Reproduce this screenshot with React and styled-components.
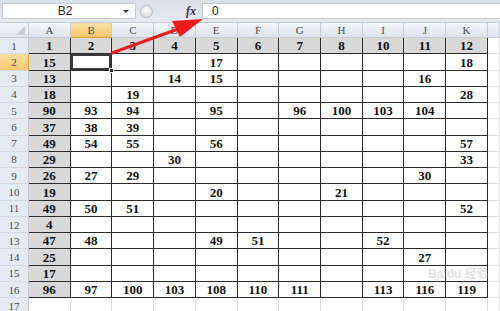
import React from "react";
import styled, { createGlobalStyle, css } from "styled-components";

const GlobalStyle = createGlobalStyle`
  html, body { margin: 0; padding: 0; background: #ffffff; overflow: hidden; }
  #root { width: 500px; height: 311px; }
`;

const Frame = styled.div`
  position: relative;
  width: 500px;
  height: 311px;
  overflow: hidden;
  background: #ffffff;
  display: flex;
  flex-direction: column;
`;

const FormulaBar = styled.div`
  height: 23px;
  flex: none;
  box-sizing: border-box;
  display: flex;
  align-items: stretch;
  padding: 3px 0 3px 2px;
  background: linear-gradient(#d9e0ea, #e4e9f0);
  border-bottom: 1px solid #c5cdd8;
`;

const NameBox = styled.div`
  width: 134px;
  box-sizing: border-box;
  background: #fff;
  border: 1px solid #c3cad4;
  display: flex;
  align-items: center;
  font-family: "Liberation Sans", Arial, sans-serif;
  font-size: 12px;
  color: #222;
`;

const NameText = styled.span`
  flex: 1;
  text-align: center;
  padding-left: 4px;
`;

const DropArrow = styled.span`
  width: 0;
  height: 0;
  margin-right: 6px;
  border-left: 3px solid transparent;
  border-right: 3px solid transparent;
  border-top: 3px solid #333;
`;

const Splitter = styled.div`
  width: 66px;
  display: flex;
  align-items: center;
  justify-content: space-between;
  padding: 0 6px 0 4px;
  box-sizing: border-box;
`;

const Knob = styled.span`
  width: 13px;
  height: 13px;
  border-radius: 50%;
  background: radial-gradient(circle at 50% 40%, #fdfdfd, #cfd5dd);
  border: 1px solid #b7bec8;
  box-sizing: border-box;
`;

const Fx = styled.span`
  font-family: "Liberation Serif", "Times New Roman", serif;
  font-style: italic;
  font-weight: bold;
  font-size: 12px;
  color: #333;
`;

const FormulaInput = styled.div`
  flex: 1;
  background: #fff;
  border: 1px solid #c3cad4;
  border-right: none;
  display: flex;
  align-items: center;
  padding-left: 9px;
  font-family: "Liberation Sans", Arial, sans-serif;
  font-size: 12px;
  color: #222;
`;

const Sheet = styled.div`
  display: grid;
  grid-template-columns: 29px repeat(11, 41.73px) 1fr;
  grid-template-rows: 15px repeat(17, 16.27px);
`;

const headerBase = css`
  box-sizing: border-box;
  display: flex;
  align-items: center;
  justify-content: center;
  font-family: "Liberation Serif", "Times New Roman", serif;
  font-size: 11px;
  color: #4a4a4a;
  border-right: 1px solid #c5cbd4;
  border-bottom: 1px solid #c5cbd4;
`;

const Corner = styled.div`
  ${headerBase};
  position: relative;
  background: linear-gradient(#f1f4f8, #dfe5ec);
  &::after {
    content: "";
    position: absolute;
    right: 3px;
    bottom: 2px;
    width: 0;
    height: 0;
    border-left: 9px solid transparent;
    border-bottom: 9px solid #c9ced6;
  }
`;

const ColHeader = styled.div`
  ${headerBase};
  background: ${(p) =>
    p.$active
      ? "linear-gradient(#fbe3a6, #f3c767)"
      : "linear-gradient(#f3f6fa, #dde3eb)"};
  border-bottom-color: ${(p) => (p.$active ? "#e5a53b" : "#c5cbd4")};
`;

const RowHeader = styled.div`
  ${headerBase};
  background: ${(p) =>
    p.$active ? "linear-gradient(#fbe1a0, #f3c86b)" : "#e4eaf2"};
  border-right-color: ${(p) => (p.$active ? "#e5a53b" : "#c5cbd4")};
  border-bottom-color: #d2d8e0;
`;

const Cell = styled.div`
  position: relative;
  box-sizing: border-box;
  display: flex;
  align-items: flex-end;
  justify-content: center;
  font-family: "Liberation Serif", "Times New Roman", serif;
  font-weight: bold;
  font-size: 13px;
  line-height: 15px;
  color: #111;
  background: ${(p) => (p.$shaded ? "#d8d8d8" : "#ffffff")};
  border-right: 1px solid ${(p) => (p.$outside ? "#dadcde" : "#2a2a2a")};
  border-bottom: 1px solid ${(p) => (p.$outside ? "#dadcde" : "#2a2a2a")};
  ${(p) =>
    p.$selected &&
    css`
      box-shadow: inset 0 0 0 2px #3a3a3a;
    `}
`;

const FillHandle = styled.span`
  position: absolute;
  right: -3px;
  bottom: -3px;
  width: 5px;
  height: 5px;
  background: #2a2a2a;
  border: 1px solid #fff;
  box-sizing: border-box;
  z-index: 2;
`;

const ArrowLayer = styled.svg`
  position: absolute;
  left: 0;
  top: 0;
  pointer-events: none;
`;

const Watermark = styled.div`
  position: absolute;
  left: 428px;
  top: 267px;
  font-family: "Liberation Sans", Arial, "Noto Sans CJK SC", sans-serif;
  font-size: 12px;
  line-height: 14px;
  font-weight: bold;
  color: rgba(160, 160, 160, 0.35);
  pointer-events: none;
  white-space: nowrap;
`;

const cols = ["A", "B", "C", "D", "E", "F", "G", "H", "I", "J", "K"];

const data = [
  ["1", "2", "3", "4", "5", "6", "7", "8", "10", "11", "12"],
  ["15", "", "", "", "17", "", "", "", "", "", "18"],
  ["13", "", "", "14", "15", "", "", "", "", "16", ""],
  ["18", "", "19", "", "", "", "", "", "", "", "28"],
  ["90", "93", "94", "", "95", "", "96", "100", "103", "104", ""],
  ["37", "38", "39", "", "", "", "", "", "", "", ""],
  ["49", "54", "55", "", "56", "", "", "", "", "", "57"],
  ["29", "", "", "30", "", "", "", "", "", "", "33"],
  ["26", "27", "29", "", "", "", "", "", "", "30", ""],
  ["19", "", "", "", "20", "", "", "21", "", "", ""],
  ["49", "50", "51", "", "", "", "", "", "", "", "52"],
  ["4", "", "", "", "", "", "", "", "", "", ""],
  ["47", "48", "", "", "49", "51", "", "", "52", "", ""],
  ["25", "", "", "", "", "", "", "", "", "27", ""],
  ["17", "", "", "", "", "", "", "", "", "", ""],
  ["96", "97", "100", "103", "108", "110", "111", "", "113", "116", "119"],
];

export default function App() {
  const rows = [];
  for (let r = 0; r < 17; r++) {
    const rowNum = r + 1;
    rows.push(
      <RowHeader key={`rh${r}`} $active={rowNum === 2}>
        {rowNum}
      </RowHeader>
    );
    for (let c = 0; c < 11; c++) {
      const inData = r < 16;
      const val = inData ? data[r][c] : "";
      const selected = rowNum === 2 && c === 1;
      rows.push(
        <Cell
          key={`c${r}-${c}`}
          $shaded={inData && (r === 0 || c === 0)}
          $outside={!inData}
          $selected={selected}
        >
          {val}
          {selected && <FillHandle />}
        </Cell>
      );
    }
    rows.push(<Cell key={`l${r}`} $outside />);
  }

  return (
    <Frame>
      <GlobalStyle />
      <FormulaBar>
        <NameBox>
          <NameText>B2</NameText>
          <DropArrow />
        </NameBox>
        <Splitter>
          <Knob />
          <Fx>fx</Fx>
        </Splitter>
        <FormulaInput>0</FormulaInput>
      </FormulaBar>
      <Sheet>
        <Corner />
        {cols.map((c) => (
          <ColHeader key={c} $active={c === "B"}>
            {c}
          </ColHeader>
        ))}
        <ColHeader />
        {rows}
      </Sheet>
      <Watermark>Baidu 经验</Watermark>
      <ArrowLayer width="500" height="311" viewBox="0 0 500 311">
        <line x1="112" y1="53" x2="182" y2="27.5" stroke="#ee1c1c" strokeWidth="3" strokeLinecap="round" />
        <polygon points="203,19 172,21 180,37" fill="#ee1c1c" />
      </ArrowLayer>
    </Frame>
  );
}
